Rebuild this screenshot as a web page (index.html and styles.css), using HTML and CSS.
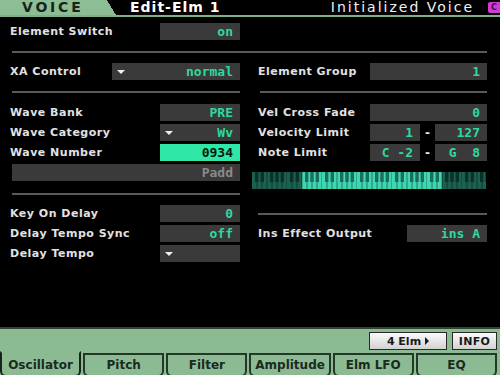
FILE: index.html
```html
<!DOCTYPE html>
<html lang="en">
<head>
  <meta charset="UTF-8" />
  <title>VOICE - Edit-Elm 1</title>
  <link rel="stylesheet" href="styles.css">
</head>
<body>
  <div class="screen">
    <header class="topbar">
      <div class="mode">VOICE</div>
      <div class="page">Edit-Elm 1</div>
      <div class="voice-name">Initialized Voice</div>
      <div class="badge">C</div>
    </header>

    <main class="params">
      <div class="row switch-row">
        <span class="label">Element Switch</span>
        <span class="field">on</span>
      </div>
      <hr class="rule full">

      <div class="cols">
        <div class="col left">
          <div class="row">
            <span class="label">XA Control</span>
            <span class="field drop xa">normal</span>
          </div>
          <hr class="rule">
          <div class="row">
            <span class="label">Wave Bank</span>
            <span class="field">PRE</span>
          </div>
          <div class="row">
            <span class="label">Wave Category</span>
            <span class="field drop">Wv</span>
          </div>
          <div class="row">
            <span class="label">Wave Number</span>
            <span class="field selected">0934</span>
          </div>
          <div class="row">
            <span class="field name">Padd</span>
          </div>
          <hr class="rule lower">
          <div class="row">
            <span class="label">Key On Delay</span>
            <span class="field">0</span>
          </div>
          <div class="row">
            <span class="label">Delay Tempo Sync</span>
            <span class="field">off</span>
          </div>
          <div class="row">
            <span class="label">Delay Tempo</span>
            <span class="field drop"></span>
          </div>
        </div>

        <div class="col right">
          <div class="row">
            <span class="label">Element Group</span>
            <span class="field big">1</span>
          </div>
          <hr class="rule">
          <div class="row">
            <span class="label">Vel Cross Fade</span>
            <span class="field big">0</span>
          </div>
          <div class="row">
            <span class="label">Velocity Limit</span>
            <span class="range">
              <span class="field lo">1</span>
              <span class="dash">-</span>
              <span class="field hi">127</span>
            </span>
          </div>
          <div class="row">
            <span class="label">Note Limit</span>
            <span class="range">
              <span class="field lo">C -2</span>
              <span class="dash">-</span>
              <span class="field hi">G&nbsp;&nbsp;8</span>
            </span>
          </div>
          <svg class="keyboard" width="234" height="17" viewBox="0 0 234 17">
            <defs>
              <pattern id="octave" x="0" y="0" width="35" height="17" patternUnits="userSpaceOnUse">
                <rect x="0" y="0" width="35" height="17" fill="#3fd6b0"/>
                <rect x="4.5" y="0" width="1" height="17" fill="#1d7d66"/>
                <rect x="9.5" y="0" width="1" height="17" fill="#1d7d66"/>
                <rect x="14.5" y="0" width="1" height="17" fill="#1d7d66"/>
                <rect x="19.5" y="0" width="1" height="17" fill="#1d7d66"/>
                <rect x="24.5" y="0" width="1" height="17" fill="#1d7d66"/>
                <rect x="29.5" y="0" width="1" height="17" fill="#1d7d66"/>
                <rect x="34.5" y="0" width="1" height="17" fill="#1d7d66"/>
                <rect x="3" y="0" width="3.4" height="10" fill="#1b6e5b"/>
                <rect x="8.6" y="0" width="3.4" height="10" fill="#1b6e5b"/>
                <rect x="18" y="0" width="3.4" height="10" fill="#1b6e5b"/>
                <rect x="23.3" y="0" width="3.4" height="10" fill="#1b6e5b"/>
                <rect x="28.6" y="0" width="3.4" height="10" fill="#1b6e5b"/>
              </pattern>
            </defs>
            <rect x="0" y="0" width="234" height="17" fill="url(#octave)"/>
            <rect x="0" y="0" width="50" height="17" fill="#000" opacity="0.55"/>
            <rect x="190" y="0" width="44" height="17" fill="#000" opacity="0.55"/>
          </svg>
          <hr class="rule lower-right">
          <div class="row">
            <span class="label">Ins Effect Output</span>
            <span class="field">ins A</span>
          </div>
        </div>
      </div>
    </main>

    <footer class="bottom">
      <div class="buttons">
        <span class="btn elm">4 Elm <span class="arrow"></span></span>
        <span class="btn info">INFO</span>
      </div>
      <nav class="tabs">
        <span class="tab active">Oscillator</span>
        <span class="tab">Pitch</span>
        <span class="tab">Filter</span>
        <span class="tab">Amplitude</span>
        <span class="tab">Elm LFO</span>
        <span class="tab">EQ</span>
      </nav>
    </footer>
  </div>
</body>
</html>
```

FILE: styles.css
```css
body {
  margin: 0;
  background: #000;
  font-family: "DejaVu Sans", sans-serif;
  color: #e4e4e4;
}

.screen {
  width: 500px;
  height: 375px;
  display: flex;
  flex-direction: column;
  background: #000;
  overflow: hidden;
}

/* top title bar */
.topbar {
  height: 15px;
  display: flex;
  align-items: flex-start;
  border-bottom: 2px solid #7fb189;
}

.mode {
  width: 116px;
  height: 15px;
  background:
    linear-gradient(#8cbd95, #8cbd95) no-repeat 0 0 / 107px 100%,
    linear-gradient(to bottom left, transparent 50%, #8cbd95 50%) no-repeat 107px 0 / 9px 100%;
  color: #16241a;
  font-weight: bold;
  font-size: 14px;
  letter-spacing: 2.8px;
  line-height: 15px;
  padding-left: 22px;
  box-sizing: border-box;
}

.page {
  margin-left: 14px;
  color: #fff;
  font-weight: bold;
  font-size: 14px;
  letter-spacing: 1px;
  line-height: 15px;
}

.voice-name {
  margin-left: auto;
  color: #f2f2f2;
  font-size: 14px;
  letter-spacing: 2px;
  line-height: 15px;
}

.badge {
  width: 12px;
  height: 11px;
  margin: 2px 0 0 14px;
  background: #d23ad6;
  border-radius: 2px 0 0 2px;
  color: #3a0a3c;
  font-size: 8px;
  font-weight: bold;
  line-height: 11px;
  text-align: center;
}

/* parameter area */
.params {
  flex: 1;
  padding: 6px 13px 0 10px;
}

.row {
  height: 17px;
  display: flex;
  align-items: center;
  justify-content: space-between;
}

.row + .row {
  margin-top: 3px;
}

.switch-row {
  width: 230px;
}

.label {
  font-weight: bold;
  font-size: 11px;
  letter-spacing: 0.5px;
  color: #e2e2e2;
  white-space: nowrap;
}

.field {
  width: 80px;
  height: 17px;
  box-sizing: border-box;
  background: #3a3a3a;
  color: #2fd89f;
  font-family: "DejaVu Sans Mono", monospace;
  font-weight: bold;
  font-size: 13px;
  line-height: 17px;
  text-align: right;
  padding-right: 7px;
  display: flex;
  align-items: center;
  justify-content: flex-end;
}

.field.drop {
  justify-content: space-between;
  padding-left: 5px;
}

.field.drop::before {
  content: "";
  border-left: 4px solid transparent;
  border-right: 4px solid transparent;
  border-top: 4px solid #f0f0f0;
}

.field.xa {
  width: 128px;
}

.field.selected {
  background: #2fe7a7;
  color: #061a12;
}

.field.name {
  width: 228px;
  margin-left: 2px;
  color: #8a8a8a;
}

.field.big {
  width: 117px;
}

.range {
  display: flex;
  align-items: center;
}

.field.lo {
  width: 50px;
}

.field.hi {
  width: 52px;
}

.dash {
  width: 15px;
  text-align: center;
  font-weight: bold;
  font-size: 12px;
  color: #e2e2e2;
}

.rule {
  border: 0;
  height: 2px;
  background: #5a5a5a;
  margin: 11px 0 11px 2px;
}

.rule.full {
  margin: 11px 0 10px 2px;
}

.rule.lower {
  margin: 12px 0 10px 2px;
}

.rule.lower-right {
  margin: 24px 0 10px 0;
}

.cols {
  display: flex;
  gap: 18px;
}

.col.left {
  width: 230px;
}

.col.right {
  width: 229px;
}

.keyboard {
  display: block;
  margin: 11px 0 0 -6px;
}

/* bottom bar and tabs */
.bottom {
  border-top: 2px solid #2e4732;
  background: #8cbb93;
}

.buttons {
  height: 24px;
  display: flex;
  justify-content: flex-end;
  align-items: center;
  gap: 5px;
  padding-right: 3px;
}

.btn {
  height: 18px;
  box-sizing: border-box;
  border: 1px solid #2a2a2a;
  background: linear-gradient(#fafafa, #d2d2d2);
  color: #1a1a1a;
  font-weight: bold;
  font-size: 11px;
  display: flex;
  align-items: center;
  justify-content: center;
  gap: 4px;
}

.btn.elm {
  width: 78px;
}

.btn.info {
  width: 45px;
  letter-spacing: 0.3px;
}

.arrow {
  border-top: 4px solid transparent;
  border-bottom: 4px solid transparent;
  border-left: 4px solid #1a1a1a;
}

.tabs {
  height: 22px;
  display: grid;
  grid-template-columns: repeat(6, 1fr);
  gap: 2px;
  padding: 0 3px 0 0;
  background: #8cbb93;
}

.tab {
  box-sizing: border-box;
  height: 24px;
  border: 2px solid #24382a;
  border-radius: 0 0 6px 6px;
  background: #8cbb93;
  color: #1c2a1f;
  font-weight: bold;
  font-size: 12px;
  text-align: center;
  line-height: 20px;
}

.tab.active {
  border-color: #8cbb93 #16241a #16241a #16241a;
  margin-top: -2px;
  height: 26px;
  line-height: 24px;
}
```
